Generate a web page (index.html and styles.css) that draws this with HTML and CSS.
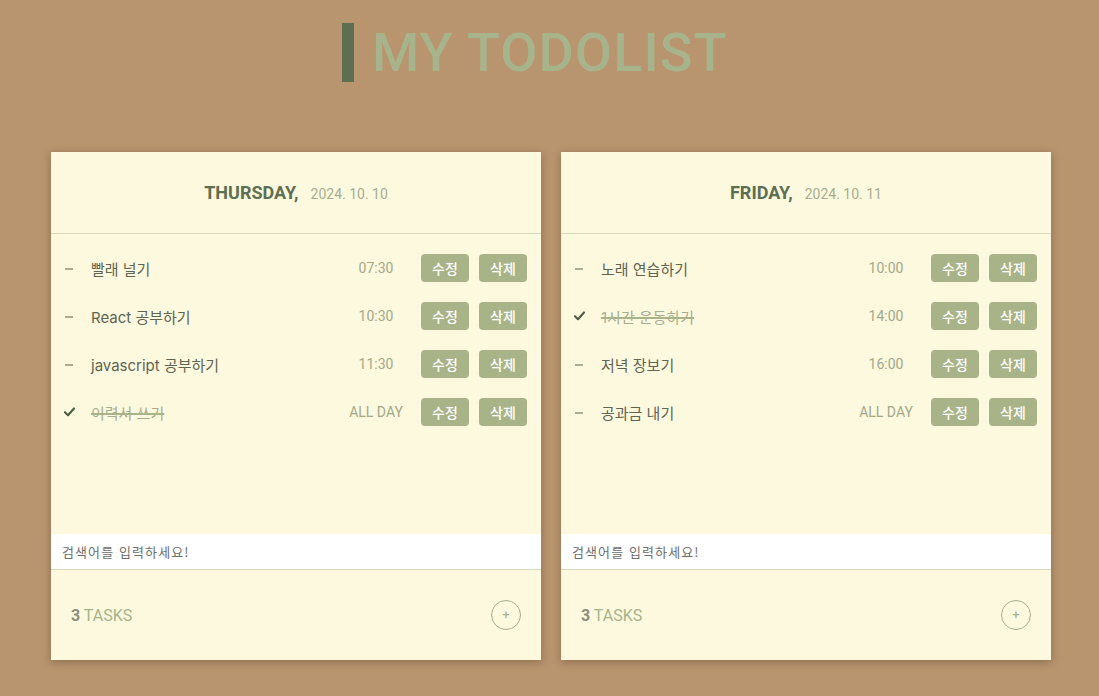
FILE: index.html
```html
<!DOCTYPE html>
<html lang="ko">
<head>
<meta charset="utf-8">
<title>MY TODOLIST</title>
<link rel="stylesheet" href="styles.css">
</head>
<body>
<header class="title">
  <span class="title-bar"></span>
  <h1 class="title-text">MY TODOLIST</h1>
</header>
<main class="boards">
  <section class="card">
    <div class="card-head"><span class="day">THURSDAY,</span><span class="date">2024. 10. 10</span></div>
    <ul class="list">
      <li class="item"><span class="mark"><span class="dash"></span></span><span class="name">빨래 널기</span><span class="time">07:30</span><button class="btn">수정</button><button class="btn">삭제</button></li>
      <li class="item"><span class="mark"><span class="dash"></span></span><span class="name">React 공부하기</span><span class="time">10:30</span><button class="btn">수정</button><button class="btn">삭제</button></li>
      <li class="item"><span class="mark"><span class="dash"></span></span><span class="name">javascript 공부하기</span><span class="time">11:30</span><button class="btn">수정</button><button class="btn">삭제</button></li>
      <li class="item done"><span class="mark"><svg class="check" width="11" height="10" viewBox="0 0 11 10"><path d="M1 5.2 L4 8.2 L10 1.5" fill="none" stroke="#4f5f45" stroke-width="2.2" stroke-linecap="round" stroke-linejoin="round"/></svg></span><span class="name">이력서 쓰기</span><span class="time">ALL DAY</span><button class="btn">수정</button><button class="btn">삭제</button></li>
    </ul>
    <input class="search" type="text" placeholder="검색어를 입력하세요!">
    <div class="card-foot"><span class="count"><b>3</b> TASKS</span><button class="add">+</button></div>
  </section>
  <section class="card">
    <div class="card-head"><span class="day">FRIDAY,</span><span class="date">2024. 10. 11</span></div>
    <ul class="list">
      <li class="item"><span class="mark"><span class="dash"></span></span><span class="name">노래 연습하기</span><span class="time">10:00</span><button class="btn">수정</button><button class="btn">삭제</button></li>
      <li class="item done"><span class="mark"><svg class="check" width="11" height="10" viewBox="0 0 11 10"><path d="M1 5.2 L4 8.2 L10 1.5" fill="none" stroke="#4f5f45" stroke-width="2.2" stroke-linecap="round" stroke-linejoin="round"/></svg></span><span class="name">1시간 운동하기</span><span class="time">14:00</span><button class="btn">수정</button><button class="btn">삭제</button></li>
      <li class="item"><span class="mark"><span class="dash"></span></span><span class="name">저녁 장보기</span><span class="time">16:00</span><button class="btn">수정</button><button class="btn">삭제</button></li>
      <li class="item"><span class="mark"><span class="dash"></span></span><span class="name">공과금 내기</span><span class="time">ALL DAY</span><button class="btn">수정</button><button class="btn">삭제</button></li>
    </ul>
    <input class="search" type="text" placeholder="검색어를 입력하세요!">
    <div class="card-foot"><span class="count"><b>3</b> TASKS</span><button class="add">+</button></div>
  </section>
</main>
</body>
</html>
```
FILE: styles.css
```css
* { box-sizing: border-box; }
html, body { margin: 0; padding: 0; }
body {
  background: #b8946f;
  font-family: "Inter", "Noto Sans CJK KR", sans-serif;
  width: 1099px;
  height: 696px;
  overflow: hidden;
}
.title {
  display: flex;
  align-items: center;
  padding: 23px 0 0 342px;
  height: 82px;
}
.title-bar {
  width: 12px;
  height: 59px;
  background: #5d6f50;
  margin-right: 18px;
}
.title-text {
  margin: 0;
  font-family: "Roboto", sans-serif;
  font-size: 54px;
  font-weight: 500;
  color: #a7b38b;
  line-height: 59px;
  letter-spacing: 1.1px;
}
.boards {
  display: flex;
  gap: 20px;
  padding: 70px 0 0 51px;
}
.card {
  width: 490px;
  height: 508px;
  background: #fdf9de;
  box-shadow: 0 2px 8px rgba(60, 40, 20, 0.35);
  display: flex;
  flex-direction: column;
}
.card-head {
  height: 82px;
  border-bottom: 1px solid #d7d9b8;
  display: flex;
  justify-content: center;
  align-items: baseline;
  padding-top: 30px;
  font-family: "Roboto", sans-serif;
}
.day {
  font-size: 18px;
  font-weight: 700;
  color: #5d6f50;
}
.date {
  font-size: 14px;
  color: #a8ad90;
  margin-left: 12px;
}
.list {
  list-style: none;
  margin: 0;
  padding: 10px 14px 0 13px;
  height: 300px;
}
.item {
  display: flex;
  align-items: center;
  height: 48px;
}
.mark {
  width: 27px;
  display: flex;
  align-items: center;
}
.dash {
  width: 8px;
  height: 2px;
  background: #a8ad90;
  margin: 1px 0 0 1px;
}
.check { display: block; margin-top: -1px; }
.name {
  flex: 1;
  font-size: 15px;
  color: #5f6451;
}
.done .name {
  color: #a8ad90;
  text-decoration: line-through;
  text-decoration-color: #a8b388;
  text-decoration-thickness: 2px;
}
.time {
  width: 70px;
  text-align: center;
  font-family: "Roboto", sans-serif;
  font-size: 14px;
  font-weight: 400;
  color: #a3a88a;
  margin-right: 10px;
}
.btn {
  width: 48px;
  height: 28px;
  border: none;
  border-radius: 4px;
  background: #a8b388;
  color: #ffffff;
  font-family: "Noto Sans CJK KR", sans-serif;
  font-size: 14px;
  font-weight: 500;
  padding: 0;
  margin-left: 10px;
}
.btn:first-of-type { margin-left: 0; }
.search {
  height: 36px;
  border: none;
  border-bottom: 1px solid #d7d9b8;
  background: #ffffff;
  padding: 0 11px;
  font-family: "Noto Sans CJK KR", sans-serif;
  font-size: 13px;
  letter-spacing: 1.1px;
  outline: none;
}
.search::placeholder { color: #6d6d6d; }
.card-foot {
  flex: 1;
  display: flex;
  align-items: center;
  justify-content: space-between;
  padding: 0 20px 0 20px;
  font-family: "Roboto", sans-serif;
}
.count {
  font-size: 16px;
  color: #a7b38b;
}
.count b { color: #8c8f7d; font-weight: 700; }
.add {
  width: 30px;
  height: 30px;
  border-radius: 50%;
  border: 1px solid #a8ad90;
  background: transparent;
  color: #a8ad90;
  font-size: 13px;
  padding: 0;
  line-height: 28px;
  font-family: "Roboto", sans-serif;
}
```
